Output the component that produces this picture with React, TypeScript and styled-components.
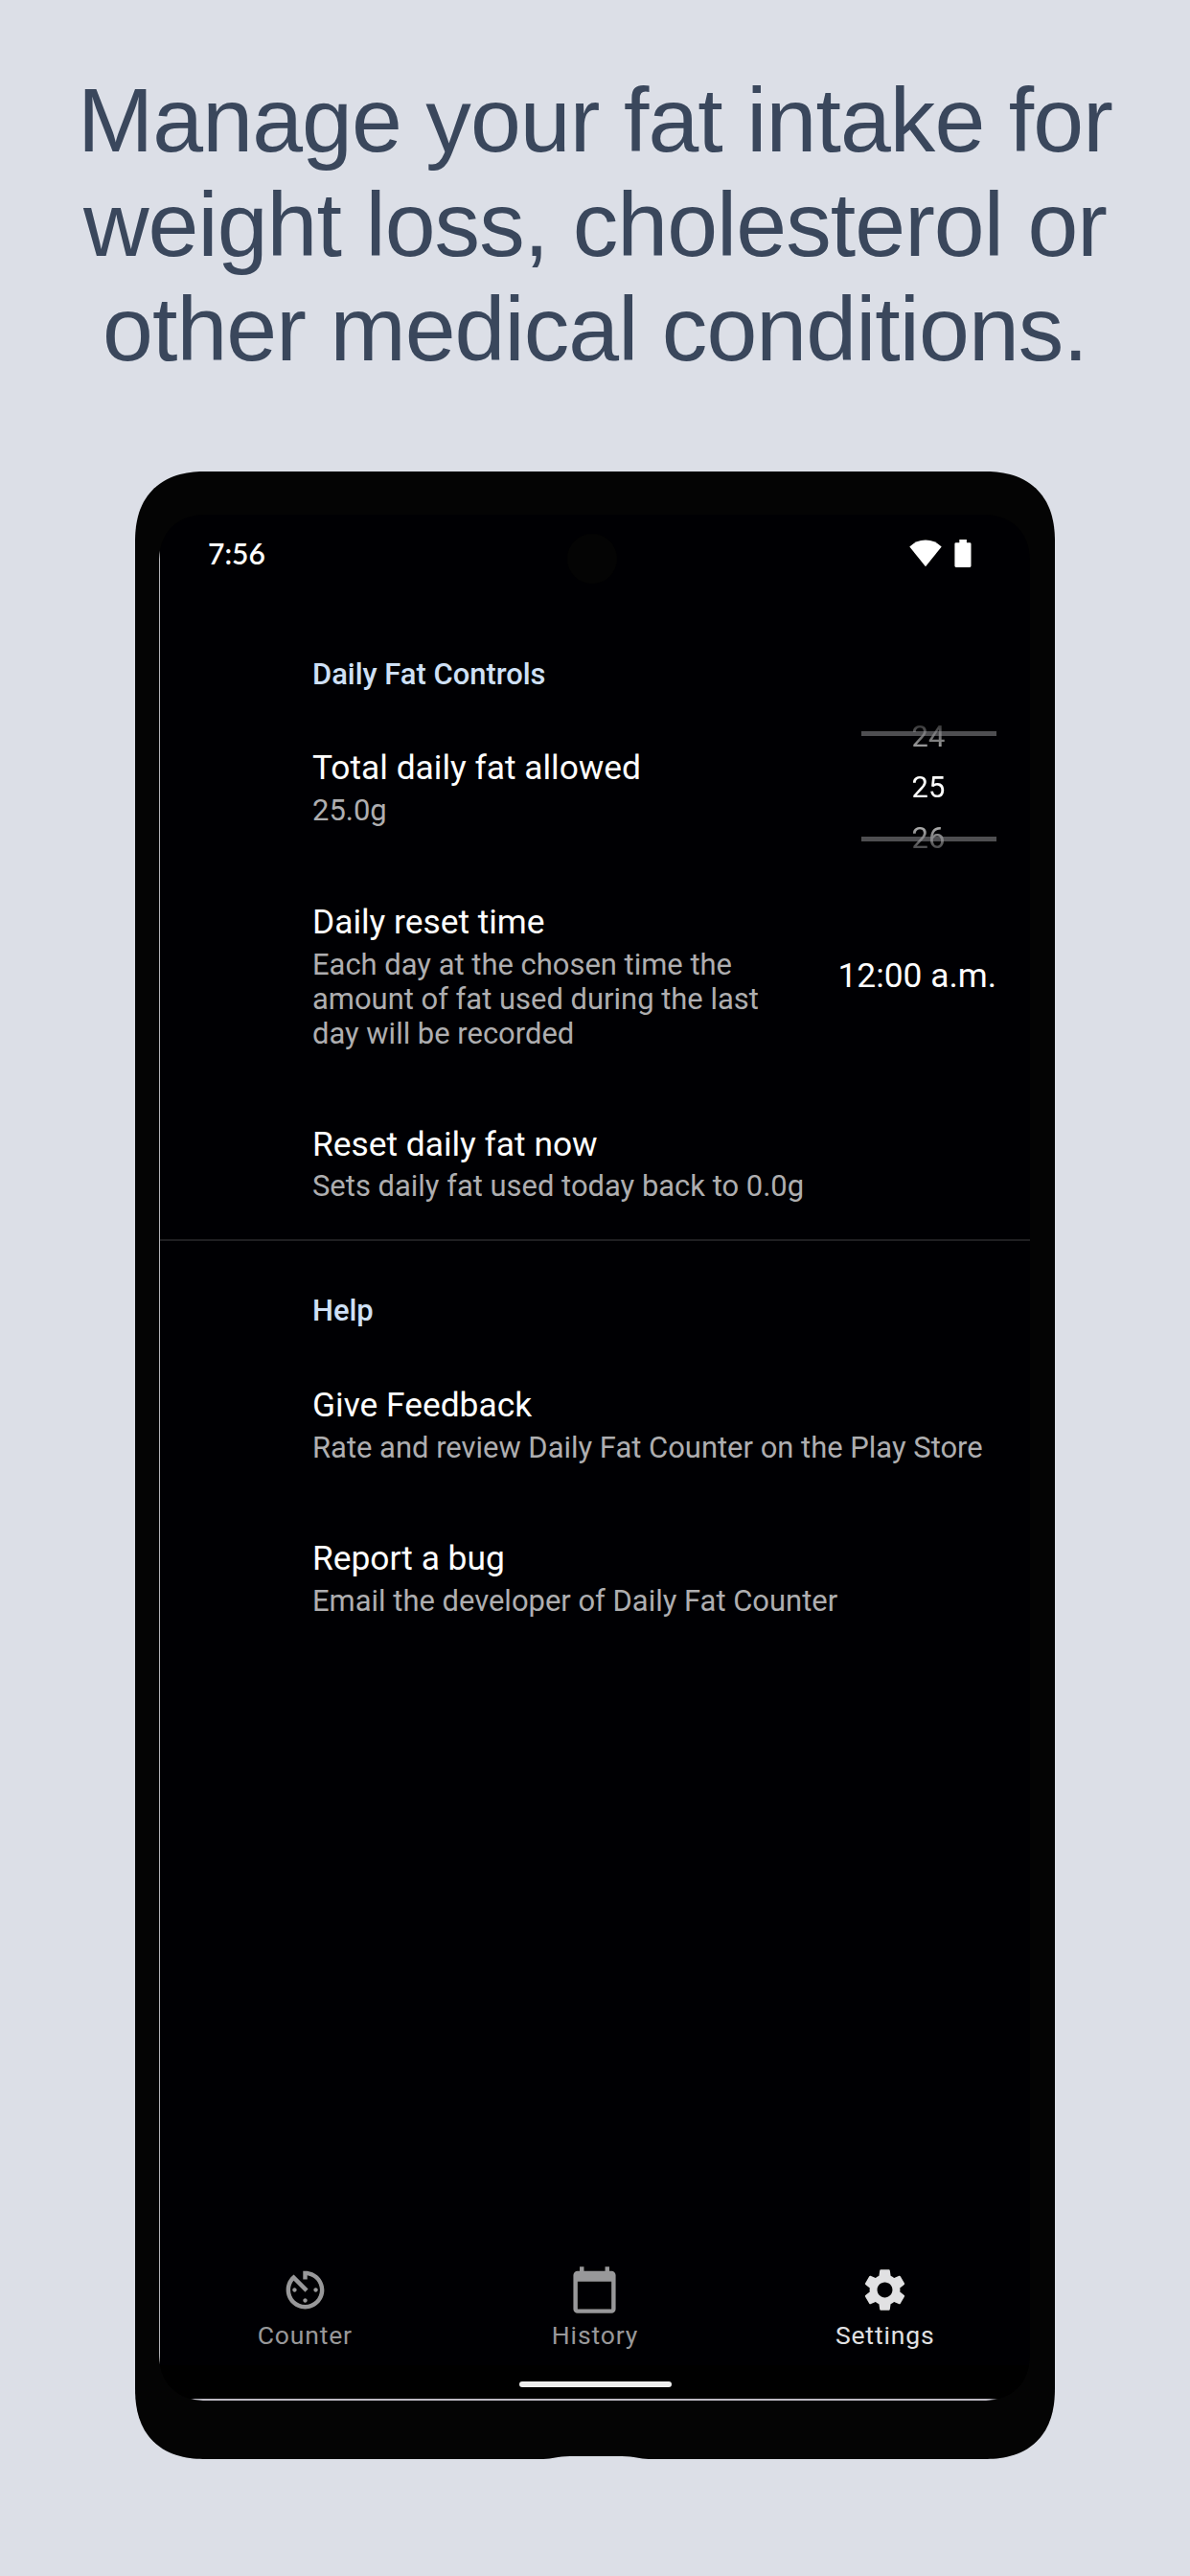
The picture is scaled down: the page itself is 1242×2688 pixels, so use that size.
import React from "react";
import styled, { createGlobalStyle } from "styled-components";

const GlobalStyle = createGlobalStyle`
  * { box-sizing: border-box; }
  body { margin: 0; background: #dcdfe7; }
`;

const Page = styled.main`
  width: 1242px;
  height: 2688px;
  background: #dcdfe7;
  display: flex;
  flex-direction: column;
  align-items: center;
  overflow: hidden;
`;

const Headline = styled.h1`
  margin: 0;
  padding-top: 71px;
  height: 492px;
  text-align: center;
  white-space: nowrap;
  font: 400 95px/109px "Liberation Sans", Arial, sans-serif;
  letter-spacing: -0.92px;
  color: #3a475c;
`;

const Phone = styled.div`
  position: relative;
  width: 960px;
  height: 2074px;
  flex: none;
  padding: 45px 26px 61px 25px;
  background: #040404;
  border-radius: 74px;
  corner-shape: superellipse(1.25);
`;

const ChinNotch = styled.svg`
  position: absolute;
  left: 422px;
  bottom: -1px;
`;

const Screen = styled.div`
  position: relative;
  height: 1968px;
  display: flex;
  flex-direction: column;
  overflow: hidden;
  padding: 0 0 2px 1px;
  border-radius: 50px;
  corner-shape: superellipse(1.2);
  background: #000003;
  font-family: Roboto, sans-serif;
`;

const LeftGlint = styled.i`
  position: absolute;
  left: 0;
  top: 32px;
  bottom: 30px;
  width: 1px;
  background: linear-gradient(transparent, #b2b2b6 8px calc(100% - 12px), transparent);
`;

const BottomGlint = styled.i`
  position: absolute;
  left: 28px;
  right: 32px;
  bottom: 0;
  height: 2px;
  background: linear-gradient(to right, transparent, #bcb9c2 10px calc(100% - 10px), transparent);
`;

const StatusBar = styled.header`
  height: 92px;
  flex: none;
  display: flex;
  align-items: flex-start;
  justify-content: space-between;
  padding: 22px 61px 0 50px;
`;

const Clock = styled.span`
  margin-top: -1px;
  font: 600 30px/38px Lato, sans-serif;
  color: #fff;
`;

const StatusIcons = styled.div`
  display: flex;
  gap: 13px;
  padding-top: 4px;
`;

const Camera = styled.div`
  position: absolute;
  left: 426px;
  top: 20px;
  width: 52px;
  height: 52px;
  border-radius: 50%;
  background: #040404;
`;

const List = styled.section`
  flex: 1;
`;

const SectionTitle = styled.h2<{ $top: number; $bottom: number }>`
  margin: 0;
  padding: ${(p) => p.$top}px 0 ${(p) => p.$bottom}px 159px;
  font-weight: 500;
  font-size: 30.9px;
  line-height: 36px;
  color: #cfe0f6;
`;

const Row = styled.div<{ $height: number }>`
  height: ${(p) => p.$height}px;
  padding: 0 35px 0 159px;
  display: flex;
  align-items: center;
  justify-content: space-between;
`;

const Copy = styled.div<{ $width?: number }>`
  width: ${(p) => (p.$width ? `${p.$width}px` : "auto")};
  white-space: ${(p) => (p.$width ? "normal" : "nowrap")};
`;

const Title = styled.div`
  font-size: 35.35px;
  line-height: 42px;
  color: #fff;
`;

const Summary = styled.div`
  margin-top: 5.8px;
  font-size: 30.94px;
  line-height: 36.2px;
  color: #aeaeb0;
`;

const Time = styled.span`
  padding-bottom: 1.5px;
  font-size: 35.35px;
  line-height: 42px;
  color: #fff;
`;

const Picker = styled.div`
  position: relative;
  width: 142px;
  padding-bottom: 1.4px;
`;

const Numbers = styled.div`
  display: flex;
  flex-direction: column;
  align-items: center;
  font-size: 30.94px;
  line-height: 53.3px;
  color: #fff;
  mask-image: linear-gradient(
    to bottom,
    rgba(0, 0, 0, 0.2) 14px,
    rgba(0, 0, 0, 0.7) 42px,
    #000 60px,
    #000 100px,
    rgba(0, 0, 0, 0.7) 120px,
    rgba(0, 0, 0, 0.2) 148px
  );
`;

const PickerLine = styled.i<{ $top: number }>`
  position: absolute;
  left: 1px;
  right: 0;
  top: ${(p) => p.$top}px;
  height: 5px;
  background: rgba(150, 150, 154, 0.52);
`;

const Divider = styled.hr`
  margin: 0;
  border: 0;
  height: 2px;
  background: #1f1f22;
`;

const NavBar = styled.nav`
  height: 138px;
  flex: none;
  display: grid;
  grid-template-columns: repeat(3, 1fr);
`;

const NavItem = styled.div<{ $active?: boolean }>`
  display: flex;
  flex-direction: column;
  align-items: center;
  padding-top: 32.5px;
  gap: 5.4px;
  font-size: 26.5px;
  line-height: 32px;
  letter-spacing: 0.85px;
  color: ${(p) => (p.$active ? "#e1e1e3" : "#98989a")};
`;

const GestureArea = styled.footer`
  height: 35px;
  flex: none;
  display: flex;
  justify-content: center;
  padding-top: 17px;
  background: #000;
`;

const HomeBar = styled.div`
  width: 159px;
  height: 6px;
  border-radius: 3px;
  background: #efefef;
`;

const icons = {
  Counter:
    "M11 17c0 .55.45 1 1 1s1-.45 1-1-.45-1-1-1-1 .45-1 1zm0-14v4h2V5.08c3.39.49 6 3.39 6 6.92 0 3.87-3.13 7-7 7s-7-3.13-7-7c0-1.68.59-3.22 1.58-4.42L12 13l1.41-1.41-6.8-6.8v.02C4.42 6.45 3 9.05 3 12c0 4.97 4.02 9 9 9 4.97 0 9-4.03 9-9s-4.03-9-9-9h-1zm7 9c0-.55-.45-1-1-1s-1 .45-1 1 .45 1 1 1 1-.45 1-1zM6 12c0 .55.45 1 1 1s1-.45 1-1-.45-1-1-1-1 .45-1 1z",
  History:
    "M20 3h-1V1h-2v2H7V1H5v2H4c-1.1 0-2 .9-2 2v16c0 1.1.9 2 2 2h16c1.1 0 2-.9 2-2V5c0-1.1-.9-2-2-2zm0 18H4V8h16v13z",
  Settings:
    "M19.14 12.94c.04-.3.06-.61.06-.94 0-.32-.02-.64-.07-.94l2.03-1.58c.18-.14.23-.41.12-.61l-1.92-3.32c-.12-.22-.37-.29-.59-.22l-2.39.96c-.5-.38-1.03-.7-1.62-.94l-.36-2.54c-.04-.24-.24-.41-.48-.41h-3.84c-.24 0-.43.17-.47.41l-.36 2.54c-.59.24-1.13.57-1.62.94l-2.39-.96c-.22-.08-.47 0-.59.22L2.74 8.87c-.12.21-.08.47.12.61l2.03 1.58c-.05.3-.09.63-.09.94s.02.64.07.94l-2.03 1.58c-.18.14-.23.41-.12.61l1.92 3.32c.12.22.37.29.59.22l2.39-.96c.5.38 1.03.7 1.62.94l.36 2.54c.05.24.24.41.48.41h3.84c.24 0 .44-.17.47-.41l.36-2.54c.59-.24 1.13-.56 1.62-.94l2.39.96c.22.08.47 0 .59-.22l1.92-3.32c.12-.22.07-.47-.12-.61l-2.01-1.58zM12 15.6c-1.98 0-3.6-1.62-3.6-3.6s1.62-3.6 3.6-3.6 3.6 1.62 3.6 3.6-1.62 3.6-3.6 3.6z",
};

type NavName = keyof typeof icons;

const NavIcon = ({ name }: { name: NavName }) => (
  <svg width="53" height="53" viewBox="0 0 24 24" fill="currentColor">
    <path d={icons[name]} />
  </svg>
);

const Preference = ({ title, summary, height, width, children }: {
  title: string;
  summary: string;
  height: number;
  width?: number;
  children?: React.ReactNode;
}) => (
  <Row $height={height}>
    <Copy $width={width}>
      <Title>{title}</Title>
      <Summary>{summary}</Summary>
    </Copy>
    {children}
  </Row>
);

export default function App() {
  return (
    <Page>
      <GlobalStyle />
      <Headline>
        Manage your fat intake for<br />
        weight loss, cholesterol or<br />
        other medical conditions.
      </Headline>
      <Phone>
        <Screen>
          <Camera />
          <StatusBar>
            <Clock>7:56</Clock>
            <StatusIcons>
              <svg width="34" height="29" viewBox="0 0 34 29" fill="#fff">
                <path d="M0.3 7.6Q7 .5 17 .5T33.7 7.6L17 28.3Z" />
              </svg>
              <svg width="18" height="29" viewBox="0 0 18 29" fill="#fff">
                <path d="M5.3 0h7.6v3.2h3.2q1.4 0 1.4 1.4v23q0 1.4-1.4 1.4H1.9Q.4 29 .4 27.6v-23q0-1.4 1.4-1.4h3.5z" />
              </svg>
            </StatusIcons>
          </StatusBar>
          <List>
            <SectionTitle $top={57} $bottom={20.6}>Daily Fat Controls</SectionTitle>
            <Preference title="Total daily fat allowed" summary="25.0g" height={159.4}>
              <Picker>
                <Numbers>
                  <span>24</span>
                  <span>25</span>
                  <span>26</span>
                </Numbers>
                <PickerLine $top={21.2} />
                <PickerLine $top={131.2} />
              </Picker>
            </Preference>
            <Preference
              title="Daily reset time"
              summary="Each day at the chosen time the amount of fat used during the last day will be recorded"
              height={234.4}
              width={490}
            >
              <Time>12:00 a.m.</Time>
            </Preference>
            <Preference title="Reset daily fat now" summary="Sets daily fat used today back to 0.0g" height={156.6} />
            <Divider />
            <SectionTitle $top={55} $bottom={21.4}>Help</SectionTitle>
            <Preference title="Give Feedback" summary="Rate and review Daily Fat Counter on the Play Store" height={160} />
            <Preference title="Report a bug" summary="Email the developer of Daily Fat Counter" height={160} />
          </List>
          <NavBar>
            {(Object.keys(icons) as NavName[]).map((name) => (
              <NavItem key={name} $active={name === "Settings"}>
                <NavIcon name={name} />
                <span>{name}</span>
              </NavItem>
            ))}
          </NavBar>
          <GestureArea>
            <HomeBar />
          </GestureArea>
          <LeftGlint />
          <BottomGlint />
        </Screen>
        <ChinNotch width="120" height="5" viewBox="0 0 120 5" fill="#dcdfe7">
          <path d="M0 5V4H4C14 4 18 1 32 1H86C100 1 104 4 114 4H120V5Z" />
        </ChinNotch>
      </Phone>
    </Page>
  );
}
